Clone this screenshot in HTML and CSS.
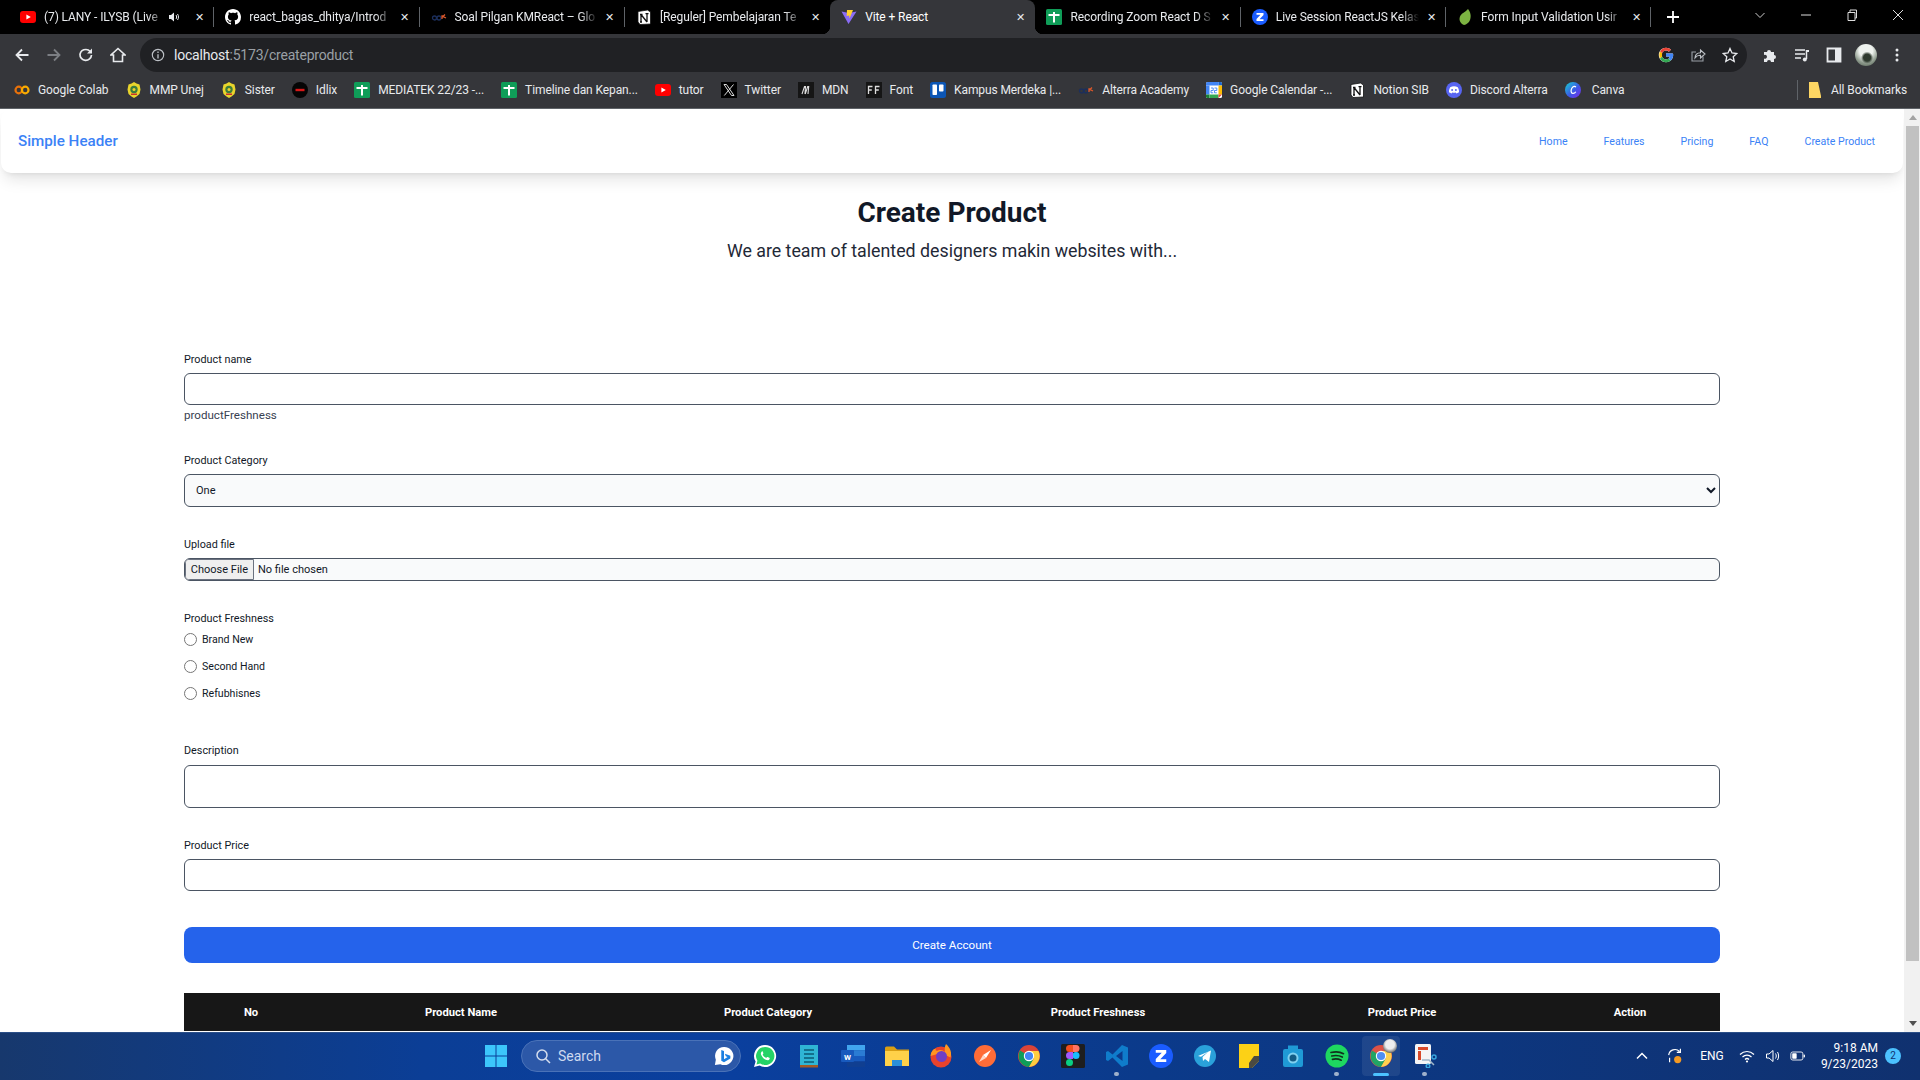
FILE: index.html
```html
<!DOCTYPE html>
<html lang="en">
<head>
<meta charset="utf-8">
<title>Vite + React</title>
<link rel="stylesheet" href="styles.css">
</head>
<body>
<svg class="defs" aria-hidden="true">
  <symbol id="yt" viewBox="0 0 16 16"><rect y="2" width="16" height="12" rx="3" fill="#f00"/><path d="M6.4 5.4v5.2L10.8 8z" fill="#fff"/></symbol>
  <symbol id="gh" viewBox="0 0 16 16"><path fill="#fff" d="M8 0C3.58 0 0 3.58 0 8c0 3.54 2.29 6.53 5.47 7.59.4.07.55-.17.55-.38 0-.19-.01-.82-.01-1.49-2.01.37-2.53-.49-2.69-.94-.09-.23-.48-.94-.82-1.13-.28-.15-.68-.52-.01-.53.63-.01 1.08.58 1.23.82.72 1.21 1.87.87 2.33.66.07-.52.28-.87.51-1.07-1.78-.2-3.64-.89-3.64-3.95 0-.87.31-1.59.82-2.15-.08-.2-.36-1.02.08-2.12 0 0 .67-.21 2.2.82.64-.18 1.32-.27 2-.27.68 0 1.36.09 2 .27 1.53-1.04 2.2-.82 2.2-.82.44 1.1.16 1.92.08 2.12.51.56.82 1.27.82 2.15 0 3.07-1.87 3.75-3.65 3.95.29.25.54.73.54 1.48 0 1.07-.01 1.93-.01 2.2 0 .21.15.46.55.38A8.013 8.013 0 0016 8c0-4.42-3.58-8-8-8z"/></symbol>
  <symbol id="alt" viewBox="0 0 16 16"><circle cx="3.5" cy="9" r="2" fill="none" stroke="#1c2f5c" stroke-width="1.3"/><circle cx="8" cy="9" r="2" fill="none" stroke="#1c2f5c" stroke-width="1.3"/><path d="M11 10V7h1.5M14 5.5l-2 2 3 1.5" fill="none" stroke="#d9572b" stroke-width="1.3"/></symbol>
  <symbol id="notion" viewBox="0 0 16 16"><path d="M2 2.5 11.5 1 14.500 3v12L4 15.500 2 13z" fill="#fff" stroke="#111" stroke-width=".8"/><path d="M5 5.500v7.500M5 5.500l6 7.500M11 4.500V13M4 5.500h2.500M9.500 4.700h3M4 13h2" stroke="#111" stroke-width="1.300" fill="none"/></symbol>
  <symbol id="sheet" viewBox="0 0 16 16"><rect width="16" height="16" rx="1.500" fill="#0f9d58"/><path d="M2.500 6h11M8 3v10.500" stroke="#fff" stroke-width="2" fill="none"/></symbol>
  <symbol id="vite" viewBox="0 0 16 16"><path d="M.5 2.500 7.500 15 15.500 2.500 8 4z" fill="#8a6cf5"/><path d="M6 1h6L8.500 9.500l-.3-3-2.500.5z" fill="#ffd028"/></symbol>
  <symbol id="zoom" viewBox="0 0 16 16"><circle cx="8" cy="8" r="8" fill="#1a5cff"/><path d="M4.500 4h7v2L7.500 10.200h4V12h-7v-2l4-4.200h-4z" fill="#fff"/></symbol>
  <symbol id="leaf" viewBox="0 0 16 16"><path d="M11 0C13.500 3 14.500 7 13 11c-1 2.800-3.500 4.500-6 5C2.500 14 1.500 10 3.500 6.500 5 4 8.500 3 11 0z" fill="#7cb342"/></symbol>
  <symbol id="colab" viewBox="0 0 16 16"><circle cx="4.800" cy="8" r="3.300" fill="none" stroke="#e8710a" stroke-width="2.200"/><circle cx="11.200" cy="8" r="3.300" fill="none" stroke="#f9ab00" stroke-width="2.200"/></symbol>
  <symbol id="unej" viewBox="0 0 16 16"><path d="M8 0 10.500 1.500 13.500 2.500l1 5-1 4.500-3 2.500L8 16l-2.500-1.500-3-2.500-1-4.500 1-5 3-1z" fill="#e9d52c"/><circle cx="8" cy="7.500" r="3.700" fill="#3c7d3c"/><circle cx="8" cy="7.500" r="1.500" fill="#e9d52c"/><path d="M5 11.500h6v1.500H5z" fill="#c9342a"/></symbol>
  <symbol id="idlix" viewBox="0 0 16 16"><circle cx="8" cy="8" r="8" fill="#050505"/><rect x="3.500" y="6.800" width="9" height="2.400" fill="#d81818"/></symbol>
  <symbol id="xlogo" viewBox="0 0 16 16"><rect width="16" height="16" fill="#000"/><path d="M3 2.500h2.500l7.500 11h-2.500zM12.500 2.500 3.300 13.500" stroke="#ddd" fill="none"/></symbol>
  <symbol id="mdn" viewBox="0 0 16 16"><rect width="16" height="16" fill="#151515"/><path d="M4 12 6.500 4.500h1L7 12M7.200 12l2.500-7.500h1L10 12" stroke="#ddd" stroke-width="1.100" fill="none"/></symbol>
  <symbol id="ff" viewBox="0 0 16 16"><rect width="16" height="16" fill="#151515"/><path d="M2.500 12V4.500h4M2.500 8h3.300M9.500 12V4.500h4M9.500 8h3.300" stroke="#ddd" stroke-width="1.300" fill="none"/></symbol>
  <symbol id="trello" viewBox="0 0 16 16"><rect width="16" height="16" rx="2.500" fill="#0c56b5"/><rect x="2.500" y="2.500" width="4.500" height="10.500" rx=".8" fill="#fff"/><rect x="9" y="2.500" width="4.500" height="7" rx=".8" fill="#fff"/></symbol>
  <symbol id="gcal" viewBox="0 0 16 16"><rect width="16" height="16" rx="1.500" fill="#fff"/><path d="M0 3.500V1.500A1.500 1.500 0 011.500 0h11v3.500z" fill="#4285f4"/><path d="M12.500 0H14.500A1.500 1.500 0 0116 1.500V3.500h-3.500z" fill="#1967d2"/><path d="M0 3.500h3.500v9H0z" fill="#4285f4"/><path d="M12.500 3.500H16v9h-3.500z" fill="#fbbc04"/><path d="M0 12.500h3.500V16H1.500A1.500 1.500 0 010 14.500z" fill="#188038"/><path d="M3.500 12.500h9V16h-9z" fill="#34a853"/><path d="M12.500 12.500H16L12.500 16z" fill="#ea4335"/><path d="M5 6h2.200v2.500H5v2.300h2.200M8.500 6h2.300v2.500H8.500v2.300h2.300" stroke="#4285f4" stroke-width=".9" fill="none"/></symbol>
  <symbol id="discord" viewBox="0 0 16 16"><circle cx="8" cy="8" r="8" fill="#5865f2"/><path d="M4.200 5.200C6.500 4 9.500 4 11.800 5.200c.9 1.500 1.300 3.300 1.200 5-1 .7-1.900 1-2.600 1.200l-.6-1c-1.200.3-2.400.3-3.600 0l-.6 1c-.7-.2-1.600-.5-2.600-1.200-.1-1.700.3-3.500 1.200-5z" fill="#fff"/><circle cx="6.100" cy="8.100" r="1" fill="#5865f2"/><circle cx="9.900" cy="8.100" r="1" fill="#5865f2"/></symbol>
  <symbol id="canva" viewBox="0 0 16 16"><defs><linearGradient id="cg" x1="0" y1="0" x2="1" y2="1"><stop offset="0" stop-color="#16d4d0"/><stop offset=".55" stop-color="#3c58e6"/><stop offset="1" stop-color="#7d2ae8"/></linearGradient></defs><circle cx="8" cy="8" r="8" fill="url(#cg)"/><path d="M10.800 5.300C10.300 3.900 8 4 6.800 6.200s-.9 5 1 5.200c1.200.1 2.400-.7 3-1.700" fill="none" stroke="#fff" stroke-width="1.200"/></symbol>
  <symbol id="gg" viewBox="0 0 16 16"><path d="M14.600 6.600H8v2.800h3.800c-.4 1.800-1.900 3-3.800 3-2.400 0-4.400-2-4.400-4.400s2-4.400 4.400-4.400c1.100 0 2.100.4 2.900 1.100l2-2C11.600 1.500 9.900.8 8 .8 4 .8.800 4 .8 8s3.200 7.200 7.200 7.200 7.200-3 7.200-7.200c0-.5 0-1-.6-1.400z" fill="#fff"/><path d="M2 4.500 4.200 6.200C4.800 4.700 6.300 3.600 8 3.600c1.100 0 2.100.4 2.900 1.100l2-2C11.600 1.500 9.900.8 8 .8 5.300.8 3 2.300 2 4.500z" fill="#ea4335"/><path d="M8 15.200c1.900 0 3.600-.6 4.800-1.800l-2.200-1.800c-.7.500-1.600.8-2.600.8-1.800 0-3.300-1.200-3.800-2.900L2 11.200c1.100 2.400 3.400 4 6 4z" fill="#34a853"/><path d="M2 4.500C1.100 6.400 1.100 9.400 2 11.200l2.200-1.700c-.3-1-.3-2.300 0-3.300z" fill="#fbbc05"/><path d="M14.600 6.600H8v2.800h3.800c-.2.900-.6 1.700-1.200 2.200l2.200 1.800c1.500-1.400 2.400-3.400 2.400-5.400 0-.5 0-1-.6-1.400z" fill="#4285f4"/></symbol>
  <symbol id="win" viewBox="0 0 24 24"><path d="M1 1h10.500v10.500H1zM12.500 1H23v10.500H12.500zM1 12.500h10.500V23H1zM12.500 12.500H23V23H12.500z" fill="#3cc6fb"/></symbol>
  <symbol id="wa" viewBox="0 0 24 24"><path d="M12 1a11 11 0 00-9.400 16.600L1 23l5.600-1.500A11 11 0 1012 1z" fill="#fff"/><path d="M12 3a9 9 0 00-7.600 13.700l-.9 3.700 3.800-1A9 9 0 1012 3z" fill="#25d366"/><path d="M8.800 7.500c-.9.700-1.300 2.100-.6 3.600 1 2.200 3 4.200 5.400 5 1.400.400 2.500-.2 3-1.200.2-.5.100-.9-.3-1.100l-1.700-.8c-.4-.2-.6 0-.9.400-.4.500-.7.500-1.200.2-1.200-.6-2.100-1.500-2.700-2.700-.2-.4 0-.7.300-1 .3-.3.400-.6.200-1L9.700 7.600c-.2-.4-.6-.4-.9-.1z" fill="#fff"/></symbol>
  <symbol id="note" viewBox="0 0 24 24"><rect x="3" y="1" width="18" height="21" fill="#2fb5d4"/><path d="M3 21h18v2.500H3z" fill="#a35a24"/><path d="M7 6h10M7 10h10M7 14h10M7 18h10" stroke="#14708c" stroke-width="1.800"/></symbol>
  <symbol id="word" viewBox="0 0 24 24"><path d="M6 1h18v5.500H6z" fill="#41a5ee"/><path d="M6 6.500h18V12H6z" fill="#2b7cd3"/><path d="M6 12h18v5.500H6z" fill="#185abd"/><path d="M6 17.500h18V23H6z" fill="#103f91"/><rect x="0" y="6" width="13" height="12" rx="1" fill="#185abd"/><text x="6.500" y="15.500" text-anchor="middle" class="svg-w">W</text></symbol>
  <symbol id="folder" viewBox="0 0 24 24"><path d="M0 4a1.500 1.500 0 011.500-1.500H9l3 3h12V8H0z" fill="#d99f13"/><path d="M0 7h24v15H0z" fill="#ffd149"/><path d="M7 16h10v6H7z" fill="#2b8fd8"/></symbol>
  <symbol id="fox" viewBox="0 0 24 24"><circle cx="12" cy="13" r="10.500" fill="#e8432c"/><path d="M1.500 12C2 7.500 4 5 7 4.500 6 6.500 7 7 9 6.500c3-1 5 0 7 1.500-.5-3-.5-5.500 1-8 4.500 4 6 9 4.500 13.500L12 9 1.500 12z" fill="#ff9520"/><circle cx="12.500" cy="12.500" r="5.500" fill="#6e3fc4"/></symbol>
  <symbol id="compass" viewBox="0 0 24 24"><circle cx="12" cy="12" r="11" fill="#ff6c37"/><path d="M18 6 10 11l3 3z" fill="#fff"/><path d="M6 18l4-7 3 3z" fill="#ffd7c7"/></symbol>
  <symbol id="chrome" viewBox="0 0 24 24"><circle cx="12" cy="12" r="11" fill="#db4437"/><path d="M12 12 3 6.600A11 11 0 0012 23l5-8z" fill="#0f9d58"/><path d="M12 7h9.500A11 11 0 0112 23l5-9z" fill="#ffcd40"/><circle cx="12" cy="12" r="5.200" fill="#fff"/><circle cx="12" cy="12" r="4.100" fill="#4285f4"/></symbol>
  <symbol id="figma" viewBox="0 0 24 24"><rect width="24" height="24" rx="1.500" fill="#1e1e1e"/><circle cx="15" cy="11.500" r="3.500" fill="#1abcfe"/><circle cx="8.500" cy="18.500" r="3.500" fill="#0acf83"/><path d="M5 11.500A3.500 3.500 0 018.500 8H12v7H8.500A3.500 3.500 0 015 11.500z" fill="#a259ff"/><path d="M5 4.500A3.500 3.500 0 018.500 1H12v7H8.500A3.500 3.500 0 015 4.500z" fill="#f24e1e"/><path d="M12 1h3a3.500 3.500 0 010 7h-3z" fill="#ff7262"/></symbol>
  <symbol id="vscode" viewBox="0 0 24 24"><path d="M17 1 7.500 10.500 3 7 1 8v8l2 1 4.500-3.500L17 23l6-2.500v-17zM17.500 7v10L11 12z" fill="#0f7ccb"/></symbol>
  <symbol id="tg" viewBox="0 0 24 24"><circle cx="12" cy="12" r="11" fill="#2aa1da"/><path d="M5 12 18 6.500 16 18l-4-3-2 2-.5-4 6-5.500L8 12.800z" fill="#fff"/></symbol>
  <symbol id="sticky" viewBox="0 0 24 24"><path d="M2 0h20v17l-7 7H2z" fill="#fcd116"/><path d="M22 12v5l-7 7h-3v-5l5-7z" fill="#4a4a42"/></symbol>
  <symbol id="cam" viewBox="0 0 24 24"><path d="M2 7a2 2 0 012-2h3V1.500h10V5h3a2 2 0 012 2v14a2 2 0 01-2 2H4a2 2 0 01-2-2z" fill="#1f9ad6"/><circle cx="12" cy="14" r="5.500" fill="#7fd0f0"/><circle cx="12" cy="14" r="3.500" fill="#135b85"/></symbol>
  <symbol id="spot" viewBox="0 0 24 24"><circle cx="12" cy="12" r="11.500" fill="#1ed760"/><path d="M6 8.500c4-1 9-.8 12.500 1.200M6.800 12c3.500-.8 7.500-.5 10.500 1.100M7.500 15.300c3-.6 6-.4 8.700.9" stroke="#11301c" stroke-width="1.700" fill="none" stroke-linecap="round"/></symbol>
  <symbol id="snip" viewBox="0 0 24 24"><rect x="2" y="0" width="16" height="20" rx="1.500" fill="#f5f5f5"/><path d="M5 3h10v3H5zM5 7h3v9H5z" fill="#d84a2a"/><path d="M9 16h7l5 5" stroke="#9fb6c8" stroke-width="1.500" fill="none"/><circle cx="21" cy="13" r="2" fill="none" stroke="#38a5dc" stroke-width="1.500"/><circle cx="15" cy="22" r="1.800" fill="none" stroke="#38a5dc" stroke-width="1.500"/></symbol>
</svg>

<div class="screen">
  <div class="tabstrip">
    <div class="tab"><svg class="fav"><use href="#yt"/></svg><span class="tab-title">(7) LANY - ILYSB (Live</span><svg class="speaker" viewBox="0 0 12 12"><path d="M1 4h2l3-2.500v9L3 8H1z" fill="#e8eaed"/><path d="M8 4c.8 1 .8 3 0 4M9.500 3c1.300 1.700 1.300 4.300 0 6" stroke="#e8eaed" fill="none"/></svg><span class="close">✕</span></div>
    <div class="tab"><svg class="fav"><use href="#gh"/></svg><span class="tab-title">react_bagas_dhitya/Introd</span><span class="close">✕</span></div>
    <div class="tab"><svg class="fav"><use href="#alt"/></svg><span class="tab-title">Soal Pilgan KMReact – Glo</span><span class="close">✕</span></div>
    <div class="tab tab-before-active"><svg class="fav"><use href="#notion"/></svg><span class="tab-title">[Reguler] Pembelajaran Te</span><span class="close">✕</span></div>
    <div class="tab tab-active"><svg class="fav"><use href="#vite"/></svg><span class="tab-title">Vite + React</span><span class="close">✕</span></div>
    <div class="tab"><svg class="fav"><use href="#sheet"/></svg><span class="tab-title">Recording Zoom React D S</span><span class="close">✕</span></div>
    <div class="tab"><svg class="fav"><use href="#zoom"/></svg><span class="tab-title">Live Session ReactJS Kelas</span><span class="close">✕</span></div>
    <div class="tab"><svg class="fav"><use href="#leaf"/></svg><span class="tab-title">Form Input Validation Usir</span><span class="close">✕</span></div>
    <svg class="newtab" viewBox="0 0 14 14"><path d="M7 1v12M1 7h12" stroke="#fff" stroke-width="1.800"/></svg>
    <div class="winctl">
      <svg class="ctl" viewBox="0 0 12 12"><path d="M1.500 4 6 8.500 10.500 4" stroke="#ccc" fill="none"/></svg>
      <svg class="ctl" viewBox="0 0 12 12"><path d="M1 6h10" stroke="#ddd"/></svg>
      <svg class="ctl" viewBox="0 0 12 12"><path d="M2 3.500h7v8H2zM4 3.500V1h6.500v8H9" stroke="#ddd" fill="none"/></svg>
      <svg class="ctl" viewBox="0 0 12 12"><path d="M1 1l10 10M11 1 1 11" stroke="#ddd"/></svg>
    </div>
  </div>

  <div class="toolbar">
    <svg class="tool tool-back" viewBox="0 0 16 16"><path d="M14.500 8H2.500M8 2.500 2.500 8 8 13.500" stroke="#e8eaed" stroke-width="1.800" fill="none"/></svg>
    <svg class="tool" viewBox="0 0 16 16"><path d="M1.500 8h12M8 2.500 13.500 8 8 13.500" stroke="#7c7f84" stroke-width="1.800" fill="none"/></svg>
    <svg class="tool" viewBox="0 0 16 16"><path d="M13.500 8A5.500 5.500 0 112 7.200C2.600 4.600 5 2.500 8 2.500c1.700 0 3.200.8 4.300 2" stroke="#e8eaed" stroke-width="1.700" fill="none"/><path d="M14 1.500v5H9z" fill="#e8eaed"/></svg>
    <svg class="tool" viewBox="0 0 16 16"><path d="M8 1.500 1 8h2.500v6.500h9V8H15z" stroke="#e8eaed" stroke-width="1.600" fill="none"/></svg>
    <div class="omnibox">
      <svg class="info" viewBox="0 0 16 16"><circle cx="8" cy="8" r="6.500" stroke="#bdc1c6" stroke-width="1.300" fill="none"/><path d="M8 7v5M8 4v1.600" stroke="#bdc1c6" stroke-width="1.500"/></svg>
      <span class="url"><span class="url-host">localhost</span>:5173/createproduct</span>
      <span class="omni-spacer"></span>
      <svg class="omni-icon"><use href="#gg"/></svg>
      <svg class="omni-icon" viewBox="0 0 16 16"><path d="M13 9.500V14H2V5h4" stroke="#9aa0a6" stroke-width="1.100" fill="none"/><path d="M5 11c.2-3.300 2.500-5.200 5.500-5.300V3l4.500 4-4.500 4V8.300C8.500 8.200 6.500 9 5 11z" stroke="#bdc1c6" stroke-width="1.100" fill="none"/></svg>
      <svg class="omni-icon" viewBox="0 0 16 16"><path d="M8 1.500 10 6l4.800.5-3.600 3.200 1 4.800L8 12l-4.200 2.500 1-4.800L1.200 6.500 6 6z" stroke="#e8eaed" stroke-width="1.300" fill="none"/></svg>
    </div>
    <svg class="tool tool-ext" viewBox="0 0 16 16"><path d="M2 5h3a2 2 0 114 0h3v3a2 2 0 110 4v3H9a2 2 0 10-4 0H2v-3.500a2 2 0 100-3.500z" fill="#e8eaed"/></svg>
    <svg class="tool" viewBox="0 0 16 16"><path d="M1 3h10M1 7h10M1 11h6" stroke="#e8eaed" stroke-width="1.500"/><path d="M12.500 3v9" stroke="#e8eaed" stroke-width="1.500"/><circle cx="10.800" cy="12.500" r="2" fill="#e8eaed"/><path d="M12 3h3v2h-3z" fill="#e8eaed"/></svg>
    <svg class="tool" viewBox="0 0 16 16"><path d="M1.500 1.500h13v13h-13z" stroke="#e8eaed" stroke-width="1.800" fill="none"/><path d="M9 1.500h5.500v13H9z" fill="#e8eaed"/></svg>
    <div class="avatar"></div>
    <svg class="tool" viewBox="0 0 16 16"><circle cx="8" cy="3" r="1.500" fill="#e8eaed"/><circle cx="8" cy="8" r="1.500" fill="#e8eaed"/><circle cx="8" cy="13" r="1.500" fill="#e8eaed"/></svg>
  </div>

  <div class="bookmarks">
    <a class="bm"><svg class="fav"><use href="#colab"/></svg>Google Colab</a>
    <a class="bm"><svg class="fav"><use href="#unej"/></svg>MMP Unej</a>
    <a class="bm"><svg class="fav"><use href="#unej"/></svg>Sister</a>
    <a class="bm"><svg class="fav"><use href="#idlix"/></svg>Idlix</a>
    <a class="bm"><svg class="fav"><use href="#sheet"/></svg>MEDIATEK 22/23 -...</a>
    <a class="bm"><svg class="fav"><use href="#sheet"/></svg>Timeline dan Kepan...</a>
    <a class="bm"><svg class="fav"><use href="#yt"/></svg>tutor</a>
    <a class="bm"><svg class="fav"><use href="#xlogo"/></svg>Twitter</a>
    <a class="bm"><svg class="fav"><use href="#mdn"/></svg>MDN</a>
    <a class="bm"><svg class="fav"><use href="#ff"/></svg>Font</a>
    <a class="bm"><svg class="fav"><use href="#trello"/></svg>Kampus Merdeka |...</a>
    <a class="bm"><svg class="fav"><use href="#alt"/></svg>Alterra Academy</a>
    <a class="bm"><svg class="fav"><use href="#gcal"/></svg>Google Calendar -...</a>
    <a class="bm"><svg class="fav"><use href="#notion"/></svg>Notion SIB</a>
    <a class="bm"><svg class="fav"><use href="#discord"/></svg>Discord Alterra</a>
    <a class="bm bm-canva"><svg class="fav"><use href="#canva"/></svg>Canva</a>
    <span class="bm-sep"></span>
    <a class="bm"><svg class="fav" viewBox="0 0 16 16"><path d="M2 0h9l3 14v2H2z" fill="#fdd663"/></svg>All Bookmarks</a>
  </div>

  <div class="viewport">
    <div class="page">
      <header class="site-header">
        <a class="brand">Simple Header</a>
        <nav class="nav">
          <a>Home</a><a>Features</a><a>Pricing</a><a>FAQ</a><a>Create Product</a>
        </nav>
      </header>
      <main class="content">
        <h1 class="title">Create Product</h1>
        <p class="subtitle">We are team of talented designers makin websites with...</p>
        <form class="form">
          <div class="field">
            <label class="label">Product name</label>
            <input class="control" type="text">
            <p class="helper">productFreshness</p>
          </div>
          <div class="field">
            <label class="label">Product Category</label>
            <select class="control select"><option>One</option></select>
          </div>
          <div class="field">
            <label class="label">Upload file</label>
            <input class="file" type="file">
          </div>
          <div class="field field-radios">
            <span class="label label-tight">Product Freshness</span>
            <label class="radio"><input type="radio" name="fresh">Brand New</label>
            <label class="radio"><input type="radio" name="fresh">Second Hand</label>
            <label class="radio"><input type="radio" name="fresh">Refubhisnes</label>
          </div>
          <div class="field">
            <label class="label label-desc">Description</label>
            <textarea class="control area"></textarea>
          </div>
          <div class="field field-price">
            <label class="label">Product Price</label>
            <input class="control" type="text">
          </div>
          <button class="submit" type="button">Create Account</button>
        </form>
        <table class="table">
          <thead>
            <tr>
              <th class="c-no">No</th>
              <th class="c-name">Product Name</th>
              <th class="c-cat">Product Category</th>
              <th class="c-fresh">Product Freshness</th>
              <th class="c-price">Product Price</th>
              <th class="c-act">Action</th>
            </tr>
          </thead>
        </table>
      </main>
    </div>
    <div class="scrollbar">
      <span class="arrow arrow-up"></span>
      <span class="thumb"></span>
      <span class="arrow arrow-down"></span>
    </div>
  </div>

  <div class="taskbar">
    <div class="task-icon"><svg class="ti"><use href="#win"/></svg></div>
    <div class="search">
      <svg class="mag" viewBox="0 0 16 16"><circle cx="7" cy="7" r="5" stroke="#d5deee" stroke-width="1.500" fill="none"/><path d="M10.500 10.500 15 15" stroke="#d5deee" stroke-width="1.500"/></svg>
      <span class="search-text">Search</span>
      <svg class="bing" viewBox="0 0 22 22"><path d="M11 1a10 10 0 00-9 14l-1 6 6-1a10 10 0 104-19z" fill="#fff"/><path d="M8 4.500l3 1v9l4-2.300-2-1-1-2.700 6 2.200v3L11 18l-3-1.800z" fill="#1b7fe0"/></svg>
    </div>
    <div class="task-icon"><svg class="ti"><use href="#wa"/></svg></div>
    <div class="task-icon"><svg class="ti"><use href="#note"/></svg></div>
    <div class="task-icon"><svg class="ti"><use href="#word"/></svg></div>
    <div class="task-icon"><svg class="ti"><use href="#folder"/></svg></div>
    <div class="task-icon"><svg class="ti"><use href="#fox"/></svg></div>
    <div class="task-icon"><svg class="ti"><use href="#compass"/></svg></div>
    <div class="task-icon"><svg class="ti"><use href="#chrome"/></svg></div>
    <div class="task-icon"><svg class="ti"><use href="#figma"/></svg></div>
    <div class="task-icon open"><svg class="ti"><use href="#vscode"/></svg></div>
    <div class="task-icon"><svg class="ti"><use href="#zoom"/></svg></div>
    <div class="task-icon"><svg class="ti"><use href="#tg"/></svg></div>
    <div class="task-icon"><svg class="ti"><use href="#sticky"/></svg></div>
    <div class="task-icon"><svg class="ti"><use href="#cam"/></svg></div>
    <div class="task-icon open"><svg class="ti"><use href="#spot"/></svg></div>
    <div class="task-icon active"><svg class="ti"><use href="#chrome"/></svg><span class="chrome-badge"></span></div>
    <div class="task-icon open"><svg class="ti"><use href="#snip"/></svg></div>
    <div class="tray">
      <svg class="tray-i" viewBox="0 0 16 16"><path d="M3 10.500 8 5.500l5 5" stroke="#fff" stroke-width="1.500" fill="none"/></svg>
      <svg class="tray-i tray-sync" viewBox="0 0 20 20"><path d="M3 9a7 7 0 0112-4M16 2v4h-4M4 12v5" stroke="#fff" stroke-width="1.300" fill="none"/><circle cx="13" cy="14" r="4" fill="#f59a23"/></svg>
      <span class="eng">ENG</span>
      <svg class="tray-i" viewBox="0 0 16 16"><path d="M1 6.500c4-4 10-4 14 0M3.500 9c2.500-2.500 6.500-2.500 9 0M6 11.500c1.200-1.200 2.800-1.200 4 0" stroke="#fff" stroke-width="1.200" fill="none"/><circle cx="8" cy="13.500" r="1.100" fill="#fff"/></svg>
      <svg class="tray-i" viewBox="0 0 16 16"><path d="M1.500 6h2.500L8 2.500v11L4 10H1.500z" stroke="#fff" fill="none"/><path d="M10.500 5.500c1 1.500 1 3.500 0 5M12.500 4c1.500 2.500 1.500 5.500 0 8" stroke="#fff" fill="none"/></svg>
      <svg class="tray-i" viewBox="0 0 18 16"><rect x="1" y="3.500" width="13.500" height="9" rx="2" stroke="#fff" fill="none"/><rect x="2.500" y="5" width="5" height="6" rx=".8" fill="#fff"/><rect x="15.300" y="6.500" width="1.500" height="3" fill="#fff"/></svg>
      <div class="clock"><span>9:18 AM</span><span>9/23/2023</span></div>
      <span class="notif">2</span>
    </div>
  </div>
</div>
</body>
</html>
```

FILE: styles.css
```css
* { box-sizing: border-box; }
html, body { margin: 0; height: 100%; overflow: hidden; }
body { font-family: Roboto, "Noto Sans", sans-serif; color: #111827; background: #000; }
.defs { position: absolute; width: 0; height: 0; overflow: hidden; }
.svg-w { font: 700 8px Roboto, sans-serif; fill: #fff; }
.screen { width: 1920px; height: 1080px; display: grid; grid-template-rows: 34px 42px 33px 923px 48px; }

/* tab strip */
.tabstrip { background: #000; display: flex; align-items: stretch; padding-left: 9px; position: relative; }
.tab { width: 205.300px; display: flex; align-items: center; padding: 0 5px 0 11px; position: relative; color: #e8eaed; font-size: 12px; letter-spacing: -.1px; }
.tab::after { content: ""; position: absolute; right: 0; top: 7px; bottom: 7px; width: 1px; background: #5f6368; }
.tab-before-active::after, .tab-active::after { display: none; }
.tab-active { background: #35363a; border-radius: 8px 8px 0 0; color: #fff; }
.tab-active::before { content: ""; position: absolute; left: -8px; bottom: 0; width: 8px; height: 8px; background: radial-gradient(circle at 0 0, transparent 8px, #35363a 8.5px); }
.tab-active > .close::after { content: ""; position: absolute; right: -8px; bottom: 0; width: 8px; height: 8px; background: radial-gradient(circle at 100% 0, transparent 8px, #35363a 8.5px); }
.fav { width: 16px; height: 16px; flex: none; margin-right: 8px; }
.tab-title { flex: 1; min-width: 0; white-space: nowrap; overflow: hidden; -webkit-mask-image: linear-gradient(90deg, #000 calc(100% - 20px), transparent calc(100% - 2px)); mask-image: linear-gradient(90deg, #000 calc(100% - 20px), transparent calc(100% - 2px)); }
.tab-active .tab-title { -webkit-mask-image: none; mask-image: none; }
.speaker { width: 12px; height: 12px; flex: none; margin: 0 9px 0 0; }
.close { width: 20px; text-align: center; font-size: 11px; flex: none; color: #e8eaed; }
.newtab { width: 14px; height: 14px; align-self: center; margin-left: 15px; }
.winctl { margin-left: auto; display: grid; grid-template-columns: repeat(4, 46px); align-items: center; justify-items: center; width: 184px; padding-bottom: 5px; }
.ctl { width: 12px; height: 12px; }

/* toolbar */
.toolbar { background: #35363a; display: flex; align-items: center; padding-left: 14px; }
.tool { width: 16px; height: 16px; margin-right: 16px; flex: none; }
.omnibox { width: 1607px; height: 34px; margin: 0 15px 0 -2px; background: #202124; border-radius: 17px; display: flex; align-items: center; padding-left: 11px; padding-right: 9px; color: #9aa0a6; font-size: 14px; letter-spacing: -.2px; }
.info { width: 14px; height: 14px; margin-right: 9px; flex: none; }
.url-host { color: #e8eaed; }
.omni-spacer { flex: 1; }
.omni-icon { width: 16px; height: 16px; margin-left: 16px; flex: none; }
.avatar { width: 22px; height: 22px; border-radius: 50%; margin: 0 12px 0 -3px; background: radial-gradient(ellipse 6px 6px at 55% 62%, #2e3a2e 0 60%, transparent 100%), radial-gradient(circle at 50% 30%, #eef2ee 0 35%, #8f9c8e 65%, #4e5b4e 100%); flex: none; }

/* bookmarks */
.bookmarks { background: #35363a; display: flex; align-items: center; padding: 0 0 4px 14px; border-bottom: 1px solid #5f6368; color: #e8eaed; font-size: 12px; letter-spacing: -.1px; height: 33px; }
.bm { display: flex; align-items: center; white-space: nowrap; margin-right: 17px; }
.bm .fav { margin-right: 8px; }
.bm-canva .fav { margin-right: 11px; }
.bm-sep { width: 1px; height: 20px; background: #5f6368; margin-left: auto; margin-right: 9px; }
.bookmarks .bm:last-child { margin-right: 14px; }

/* page */
.viewport { display: flex; background: #fff; min-height: 0; }
.page { flex: 1; min-width: 0; overflow: hidden; }
.site-header { height: 64px; margin: 0 1px; padding: 0 28px 0 17px; display: flex; align-items: center; justify-content: space-between; background: #fff; border-radius: 10px; box-shadow: 0 10px 15px -3px rgba(0,0,0,.1), 0 4px 6px -4px rgba(0,0,0,.1); }
.brand { color: #3b82f6; font-size: 15.200px; font-weight: 500; }
.nav { display: flex; gap: 36px; color: #3b82f6; font-size: 10.600px; font-weight: 400; }
.content { width: 1536px; margin: 0 auto; padding-top: 22px; }
.title { margin: 0; text-align: center; font-size: 28px; line-height: 36px; font-weight: 700; color: #111827; }
.subtitle { margin: 6px 0 0; text-align: center; font-size: 17.800px; line-height: 28px; color: #1f2937; }
.form { margin-top: 87px; }
.field { margin-bottom: 30px; display: flex; flex-direction: column; align-items: stretch; }
.label { display: block; font-size: 10.800px; line-height: 16px; font-weight: 400; margin-bottom: 5px; color: #111827; }
.label-tight { margin-bottom: 5px; }
.label-desc { margin-bottom: 6px; }
.control { display: block; width: 100%; height: 32px; border: 1px solid #4b5563; border-radius: 6px; background: #fff; padding: 0 11px; font: inherit; font-size: 11px; outline: 0; }
.select { height: 33px; padding: 0 7px; background: #f9fafb; color: #111827; }
.area { height: 43px; resize: none; }
.helper { margin: 2px 0 0; font-size: 11.600px; line-height: 16px; color: #374151; }
.file { display: block; width: 100%; height: 23px; border: 1px solid #4b5563; border-radius: 6px; background: #f9fafb; font: inherit; font-size: 11px; line-height: 19px; color: #111827; padding: 0; }
.file::file-selector-button { height: 21px; width: 69px; margin: 0 4px 0 0; padding: 0; border: 1px solid #6b7280; border-radius: 3px 0 0 3px; background: #efefef; color: #111827; font: inherit; }
.field-radios { margin-bottom: 36px; }
.radio { display: flex; align-items: center; height: 27px; font-size: 10.600px; font-weight: 400; color: #111827; }
.radio input { width: 13px; height: 13px; margin: 0 5px 0 0; flex: none; }
.label-tight + .radio { margin-top: -6px; }
.field-price { margin-bottom: 36px; }
.submit { display: block; width: 100%; height: 36px; border: 0; border-radius: 8px; background: #2563eb; color: #fff; font: inherit; font-size: 11.600px; font-weight: 400; }
.table { width: 1536px; margin-top: 30px; border-collapse: collapse; table-layout: fixed; background: #171717; color: #fff; font-size: 11.200px; }
.table th { height: 38px; padding: 0; font-weight: 700; text-align: center; }
.c-no { width: 134px; }
.c-name { width: 286px; }
.c-cat { width: 328px; }
.c-fresh { width: 332px; }
.c-price { width: 276px; }
.c-act { width: 180px; }

/* scrollbar */
.scrollbar { width: 17px; flex: none; background: #f1f1f1; display: flex; flex-direction: column; align-items: center; }
.arrow { width: 0; height: 0; flex: none; border-left: 4.500px solid transparent; border-right: 4.500px solid transparent; }
.arrow-up { border-bottom: 5px solid #a3a3a3; margin: 6px 0 6px; }
.arrow-down { border-top: 5px solid #505050; margin: auto 0 6px; }
.thumb { width: 13px; height: 835px; background: #c1c1c1; flex: none; }

/* taskbar */
.taskbar { display: flex; align-items: center; padding: 0 0 1px 474px; border-top: 1px solid #2b4f88; background: linear-gradient(90deg, #17386d 0, #0b3e96 22%, #0a3f9e 38%, #0b3a8a 60%, #10316f 100%); color: #fff; position: relative; }
.task-icon { width: 44px; height: 46px; display: flex; align-items: center; justify-content: center; position: relative; flex: none; }
.ti { width: 24px; height: 24px; }
.task-icon.open::after { content: ""; position: absolute; bottom: 3px; left: 50%; width: 5px; height: 4px; margin-left: -3px; border-radius: 2px; background: #9fb1cc; }
.task-icon.active::before { content: ""; position: absolute; inset: 3px; border-radius: 4px; background: rgba(255,255,255,.08); }
.task-icon.active::after { content: ""; position: absolute; bottom: 3px; left: 50%; width: 16px; height: 3px; margin-left: -8px; border-radius: 2px; background: #4cc2ff; }
.chrome-badge { position: absolute; right: 6px; top: 6px; width: 14px; height: 14px; border-radius: 50%; background: radial-gradient(circle at 50% 40%, #eee 0 40%, #555 80%); }
.search { width: 220px; height: 32px; margin: 0 2px 0 3px; display: flex; align-items: center; padding: 0 6px 0 13px; background: #2c58a8; border: 1px solid #4a72b8; border-radius: 16px; flex: none; }
.mag { width: 16px; height: 16px; flex: none; margin-right: 7px; }
.search-text { font-size: 14px; color: #cfdaf0; flex: 1; }
.bing { width: 20px; height: 20px; flex: none; }
.tray { margin-left: auto; width: 295px; display: grid; grid-template-columns: 32px 34px 40px 30px 22px 28px 69px 24px 16px; align-items: center; justify-items: center; }
.tray-i { width: 16px; height: 16px; }
.tray-sync { width: 18px; height: 18px; }
.eng { font-size: 12px; }
.clock { display: flex; flex-direction: column; align-items: flex-end; justify-self: end; padding-right: 3px; font-size: 12px; line-height: 16px; white-space: nowrap; }
.notif { width: 16px; height: 16px; border-radius: 50%; background: #4cc2ff; color: #10316f; font-size: 10px; line-height: 16px; text-align: center; }
```
